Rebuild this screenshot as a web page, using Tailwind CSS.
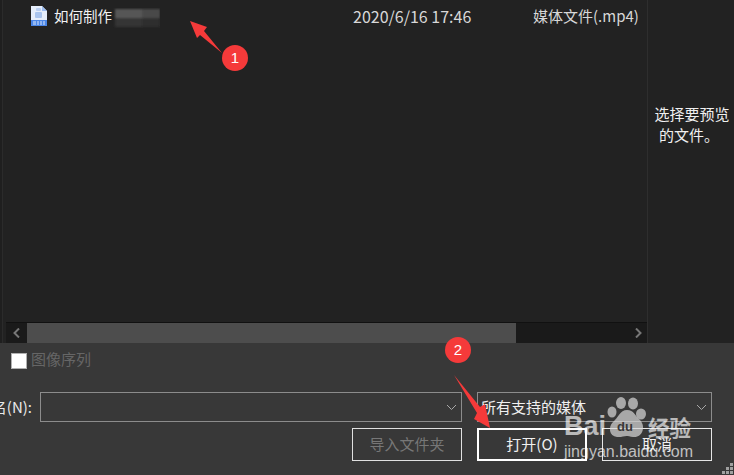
<!DOCTYPE html>
<html lang="zh-CN">
<head>
  <meta charset="UTF-8" />
  <title>打开文件</title>
  <script src="https://cdn.jsdelivr.net/npm/@tailwindcss/browser@4"></script>
</head>
<body class="bg-[#383838] font-['Noto_Sans_CJK_SC','Noto_Sans',sans-serif] text-[15px] overflow-hidden">
  <div class="relative w-[734px] h-[475px] overflow-hidden">

    <!-- file list + preview -->
    <div class="flex h-[343px] bg-[#222222]">
      <div class="w-[3px] bg-[#1f1f1f] border-r border-[#2b2b2b]"></div>
      <div class="w-[644px] pl-[3px] flex flex-col justify-between">
        <div class="flex h-[32px] items-center text-[#d8d8d8]">
          <svg class="ml-[25px] w-[16px] h-[20px] shrink-0" viewBox="0 0 16 20">
            <path d="M0 0H11L16 5V20H0Z" fill="#e6eefb" />
            <path d="M11 0L16 5H11Z" fill="#9dbdf0" />
            <rect x="0" y="14" width="16" height="6" fill="#4a86e8" />
            <rect x="4" y="6" width="7" height="6" rx="1" fill="#a9c4ee" />
            <rect x="5" y="2" width="5" height="3" rx="1" fill="#b9cff2" />
            <path d="M2 16h3M6 16h2M9 16h2M12 16h2M2 18h3M6 18h2M9 18h2M12 18h2" stroke="#dbe7fa" stroke-width="1" />
          </svg>
          <span class="ml-[7px] text-[14.5px] text-[#f2f2f2]">如何制作</span>
          <svg class="w-[48px] h-[20px] shrink-0 mt-[3px]" viewBox="0 0 48 20">
            <defs><filter id="mosaic"><feGaussianBlur stdDeviation="0.8" /></filter></defs>
            <g filter="url(#mosaic)">
              <rect x="3" y="1" width="27" height="9" fill="#565656" />
              <rect x="30" y="1" width="18" height="9" fill="#484848" />
              <rect x="3" y="10" width="27" height="9" fill="#363636" />
              <rect x="30" y="10" width="18" height="9" fill="#2e2e2e" />
            </g>
          </svg>
          <span class="ml-[193px] w-[180px] shrink-0 text-[16px]">2020/6/16 17:46</span>
          <span class="whitespace-nowrap">媒体文件(.mp4)</span>
        </div>
        <!-- horizontal scrollbar -->
        <div class="flex h-[21px] bg-[#1a1a1a] border-t border-[#111111]">
          <div class="w-[21px] flex items-center justify-center">
            <svg class="w-[8px] h-[10px]" viewBox="0 0 8 10"><path d="M6 0.5L1.5 5L6 9.5" fill="none" stroke="#777" stroke-width="2" /></svg>
          </div>
          <div class="w-[489px] bg-[#4d4d4d]"></div>
          <div class="flex-1 flex items-center justify-end pr-[5px]">
            <svg class="w-[8px] h-[10px]" viewBox="0 0 8 10"><path d="M2 0.5L6.5 5L2 9.5" fill="none" stroke="#777" stroke-width="2" /></svg>
          </div>
        </div>
      </div>
      <div class="flex-1 border-l border-[#2e2e2e] flex flex-col items-center justify-center pb-[96px] leading-[21px] text-[#f0f0f0] whitespace-nowrap">
        <span class="pl-[2px]">选择要预览</span>
        <span class="pr-[4px]">的文件。</span>
      </div>
    </div>

    <!-- bottom panel -->
    <div class="flex items-center h-[17px] mt-[9px] pl-[11px]">
      <div class="w-[16px] h-[16px] bg-white border border-[#b0b0b0]"></div>
      <span class="ml-[4px] -mt-[3px] text-[#666666]">图像序列</span>
    </div>
    <div class="flex mt-[23px] h-[30px]">
      <div class="w-[32px] flex justify-end items-center overflow-hidden whitespace-nowrap text-[#e8e8e8] shrink-0">文件名(N):</div>
      <div class="ml-[8px] w-[422px] border border-[#8c8c8c] flex items-center justify-end pr-[4px]">
        <svg class="w-[11px] h-[7px]" viewBox="0 0 11 7"><path d="M1 1L5.5 5.5L10 1" fill="none" stroke="#a8a8a8" stroke-width="1" /></svg>
      </div>
      <div class="ml-[15px] w-[235px] border border-[#8c8c8c] flex items-center justify-between pl-[3px] pr-[4px] text-[#f0f0f0]">
        <span>所有支持的媒体</span>
        <svg class="w-[11px] h-[7px]" viewBox="0 0 11 7"><path d="M1 1L5.5 5.5L10 1" fill="none" stroke="#a8a8a8" stroke-width="1" /></svg>
      </div>
    </div>
    <div class="flex justify-end gap-[15px] mt-[6px] pr-[22px]">
      <button class="w-[110px] h-[33px] border border-[#e0e0e0] text-[#777777] pb-[1px]">导入文件夹</button>
      <button class="w-[110px] h-[33px] border-2 border-white text-[#f0f0f0] pb-[1px]">打开(O)</button>
      <button class="w-[110px] h-[33px] border border-[#e6e6e6] text-[#f0f0f0] pb-[1px]">取消</button>
    </div>

    <!-- resize grip -->
    <svg class="absolute right-0 bottom-0 w-[12px] h-[12px]" viewBox="0 0 12 12" fill="#a0a0a0">
      <rect x="8" y="0" width="3" height="3" /><rect x="4" y="4" width="3" height="3" /><rect x="8" y="4" width="3" height="3" />
      <rect x="0" y="8" width="3" height="3" /><rect x="4" y="8" width="3" height="3" /><rect x="8" y="8" width="3" height="3" />
    </svg>

    <!-- baidu watermark -->
    <div class="absolute left-[564px] top-[397px] w-[130px] h-[62px] pointer-events-none">
      <svg class="absolute left-[43px] top-0 w-[39px] h-[41px]" viewBox="0 0 39 41" fill="#d8d8d8" fill-opacity="0.7">
        <ellipse cx="5" cy="15" rx="4.500" ry="5.500" />
        <ellipse cx="14" cy="6" rx="5" ry="6" />
        <ellipse cx="26" cy="6.500" rx="5" ry="6" />
        <ellipse cx="34" cy="17" rx="5" ry="5.500" />
        <path d="M20 13C27 13 28 19 33 23C39 29 36 41 26 40C23 39.500 21 39 19.500 39C17 39 14 40.500 10 40C2 39 1 30 6 25C11 21 13 13 20 13Z" />
      </svg>
      <span class="absolute left-0 top-[16px] text-[27px] leading-[27px] font-bold font-['Liberation_Sans',sans-serif] text-[#ffffff]/65">Bai</span>
      <span class="absolute left-[53px] top-[23px] text-[13px] leading-[13px] font-bold font-['Liberation_Sans',sans-serif] text-[#383838]">du</span>
      <span class="absolute left-[84px] top-[18px] text-[21.5px] leading-[24px] font-bold text-[#ffffff]/65 whitespace-nowrap">经验</span>
      <span class="absolute left-0 top-[45px] text-[16px] leading-[20px] font-['Liberation_Sans',sans-serif] text-[#ffffff]/70 whitespace-nowrap">jingyan.baidu.com</span>
    </div>

    <!-- red annotations -->
    <svg class="absolute inset-0 w-[734px] h-[475px] pointer-events-none" viewBox="0 0 734 475" fill="#f53a3a">
      <path d="M190 21L207 27L204 31L222 53L200 35L197 38Z" />
      <path d="M454 375L480 407L485 404L490 428L474 419L477 413Z" />
    </svg>
    <div class="absolute left-[222px] top-[45px] w-[26px] h-[26px] rounded-full bg-[#f53a3a] text-white flex items-center justify-center font-['Liberation_Sans',sans-serif] text-[15px]">1</div>
    <div class="absolute left-[445px] top-[337px] w-[26px] h-[26px] rounded-full bg-[#f53a3a] text-white flex items-center justify-center font-['Liberation_Sans',sans-serif] text-[15px]">2</div>
  </div>
</body>
</html>
